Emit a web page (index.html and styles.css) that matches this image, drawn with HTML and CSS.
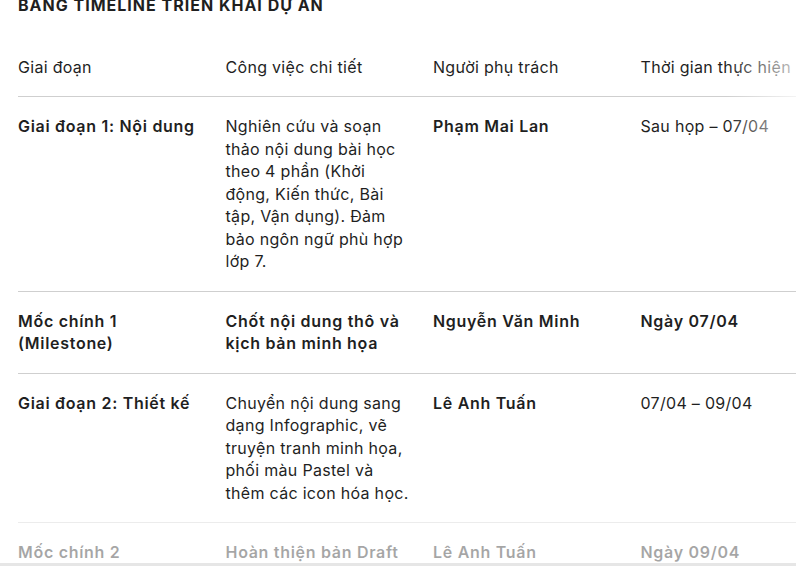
FILE: index.html
```html
<!DOCTYPE html>
<html lang="vi">
<head>
<meta charset="utf-8">
<title>Bảng timeline triển khai dự án</title>
<link rel="stylesheet" href="styles.css">
</head>
<body>
<div class="page">
  <h2 class="title">BẢNG TIMELINE TRIỂN KHAI DỰ ÁN</h2>
  <div class="scroller">
    <table class="timeline">
      <thead>
        <tr>
          <th>Giai đoạn</th>
          <th>Công việc chi tiết</th>
          <th>Người phụ trách</th>
          <th>Thời gian thực hiện</th>
        </tr>
      </thead>
      <tbody>
        <tr>
          <td class="strong">Giai đoạn 1: Nội dung</td>
          <td>Nghiên cứu và soạn thảo nội dung bài học theo 4 phần (Khởi động, Kiến thức, Bài tập, Vận dụng). Đảm bảo ngôn ngữ phù hợp lớp 7.</td>
          <td class="strong">Phạm Mai Lan</td>
          <td>Sau họp – 07/04</td>
        </tr>
        <tr>
          <td class="strong">Mốc chính 1 (Milestone)</td>
          <td class="strong">Chốt nội dung thô và kịch bản minh họa</td>
          <td class="strong">Nguyễn Văn Minh</td>
          <td class="strong">Ngày 07/04</td>
        </tr>
        <tr>
          <td class="strong">Giai đoạn 2: Thiết kế</td>
          <td>Chuyển nội dung sang dạng Infographic, vẽ truyện tranh minh họa, phối màu Pastel và <span class="keep">thêm các icon hóa học.</span></td>
          <td class="strong">Lê Anh Tuấn</td>
          <td>07/04 – 09/04</td>
        </tr>
        <tr>
          <td class="strong">Mốc chính 2</td>
          <td class="strong">Hoàn thiện bản Draft</td>
          <td class="strong">Lê Anh Tuấn</td>
          <td class="strong">Ngày 09/04</td>
        </tr>
      </tbody>
    </table>
  </div>
  <div class="fade-right"></div>
  <div class="fade-bottom"></div>
</div>
</body>
</html>
```

FILE: styles.css
```css
html, body {
  margin: 0;
  padding: 0;
  background: #ffffff;
  overflow: hidden;
}

.page {
  position: relative;
  width: 796px;
  height: 566px;
  overflow: hidden;
  font-family: Inter, "Noto Sans", sans-serif;
  color: #1f1f1f;
}

.title {
  margin: -5px 0 0 18px;
  font-size: 16px;
  line-height: 20px;
  font-weight: 700;
  letter-spacing: 1px;
  color: #1f1f1f;
  white-space: nowrap;
}

.scroller {
  margin-top: 22.5px;
  padding-left: 18px;
}

.timeline {
  border-collapse: collapse;
  table-layout: fixed;
  width: 830px;
  font-size: 16px;
  line-height: 22.5px;
  letter-spacing: 0.3px;
}

.timeline th,
.timeline td {
  width: 207.5px;
  box-sizing: border-box;
  padding: 18px 25px 18px 0;
  text-align: left;
  vertical-align: top;
  border-bottom: 1px solid #cfcfcf;
}

.timeline th {
  font-weight: 400;
  white-space: nowrap;
}

.timeline td {
  font-weight: 400;
}

.timeline td.strong {
  font-weight: 600;
  letter-spacing: 0.7px;
}

.keep {
  white-space: nowrap;
}

.fade-right {
  position: absolute;
  top: 40px;
  right: 0;
  width: 70px;
  height: 110px;
  background: linear-gradient(to right, rgba(255,255,255,0), rgba(255,255,255,0.75));
  pointer-events: none;
}

.fade-bottom {
  position: absolute;
  left: 0;
  right: 0;
  bottom: 0;
  height: 44px;
  background: rgba(255,255,255,0.6);
  border-bottom: 3px solid #e6e6e6;
  box-sizing: border-box;
  pointer-events: none;
}
```
